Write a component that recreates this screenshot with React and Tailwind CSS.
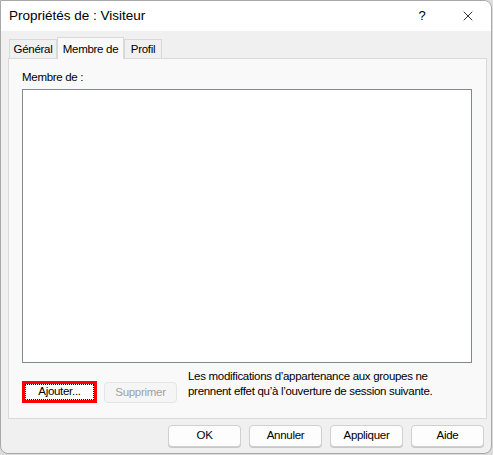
import { X } from 'lucide-react'

const FONT = { fontFamily: '"Liberation Sans", "Noto Sans", Arial, sans-serif' }

function Tab({ label, active, width }) {
  if (active) {
    return (
      <div
        className="relative z-10 -mb-px flex h-[22px] items-start justify-center border border-b-0 border-[#d9d9d9] bg-[#f9f9f9] pt-[3px] text-black"
        style={{ width }}
      >
        {label}
      </div>
    )
  }
  return (
    <div
      className="mt-[2px] flex h-[19px] items-center justify-center border border-b-0 border-[#d9d9d9] bg-[#f0f0f0] pt-[2px] text-black"
      style={{ width }}
    >
      {label}
    </div>
  )
}

function DialogButton({ children }) {
  return (
    <button className="flex h-[22px] w-[73px] items-center justify-center rounded-[4px] border border-[#d0d0d0] bg-[#fdfdfd] text-black shadow-[0_1px_0_#c8c8c8]">
      {children}
    </button>
  )
}

export default function App() {
  return (
    <div className="h-[455px] w-[493px] bg-[#dcdcdc]" style={FONT}>
      <div className="flex h-[454px] w-[492px] flex-col overflow-hidden rounded-tr-[8px] rounded-b-[8px] border border-[#a8a8a8] bg-[#f0f0f0]">
        {/* title bar */}
        <div className="flex h-[30px] shrink-0 items-center bg-white">
          <span className="pl-[8px] text-[13.5px] text-black">Propriétés de : Visiteur</span>
          <div className="ml-auto flex h-full">
            <div className="flex w-[46px] items-center justify-center text-[13px] text-black">?</div>
            <div className="flex w-[46px] items-center justify-center">
              <X size={16} strokeWidth={1.2} className="text-black" />
            </div>
          </div>
        </div>

        <div className="flex flex-col text-[11.5px] tracking-[-0.3px]">
          {/* tabs */}
          <div className="flex flex-col px-[7px] pt-[6px]">
            <div className="flex h-[21px] items-end pl-[1px]">
              <Tab label="Général" width={48} />
              <Tab label="Membre de" width={67} active />
              <Tab label="Profil" width={38} />
            </div>
            <div className="flex h-[361px] w-[479px] flex-col border border-[#d9d9d9] bg-[#f9f9f9] pl-[13px] pr-[15px]">
              <div className="pt-[11px] leading-[15px] text-black">Membre de :</div>
              <div className="mt-[4px] h-[274px] w-[450px] border border-[#828790] bg-white" />
              <div className="mt-[6px] flex items-start">
                <button className="mt-[12px] flex h-[22px] w-[75px] items-center justify-center border-[3px] border-[#ff0000] bg-white text-black">
                  <span className="flex h-full w-full items-center justify-center border border-dotted border-black">
                    Ajouter...
                  </span>
                </button>
                <button className="ml-[7px] mt-[13px] flex h-[21px] w-[73px] items-center justify-center rounded-[4px] border border-[#e5e5e5] bg-[#f5f5f5] text-[#a0a0a0]">
                  Supprimer
                </button>
                <p className="ml-[11px] leading-[15px] text-black">
                  Les modifications d’appartenance aux groupes ne
                  <br />
                  prennent effet qu’à l’ouverture de session suivante.
                </p>
              </div>
            </div>
          </div>

          {/* dialog buttons */}
          <div className="mt-[6px] flex justify-end gap-[8px] pr-[7px]">
            <DialogButton>OK</DialogButton>
            <DialogButton>Annuler</DialogButton>
            <DialogButton>Appliquer</DialogButton>
            <DialogButton>Aide</DialogButton>
          </div>
        </div>
      </div>
    </div>
  )
}
